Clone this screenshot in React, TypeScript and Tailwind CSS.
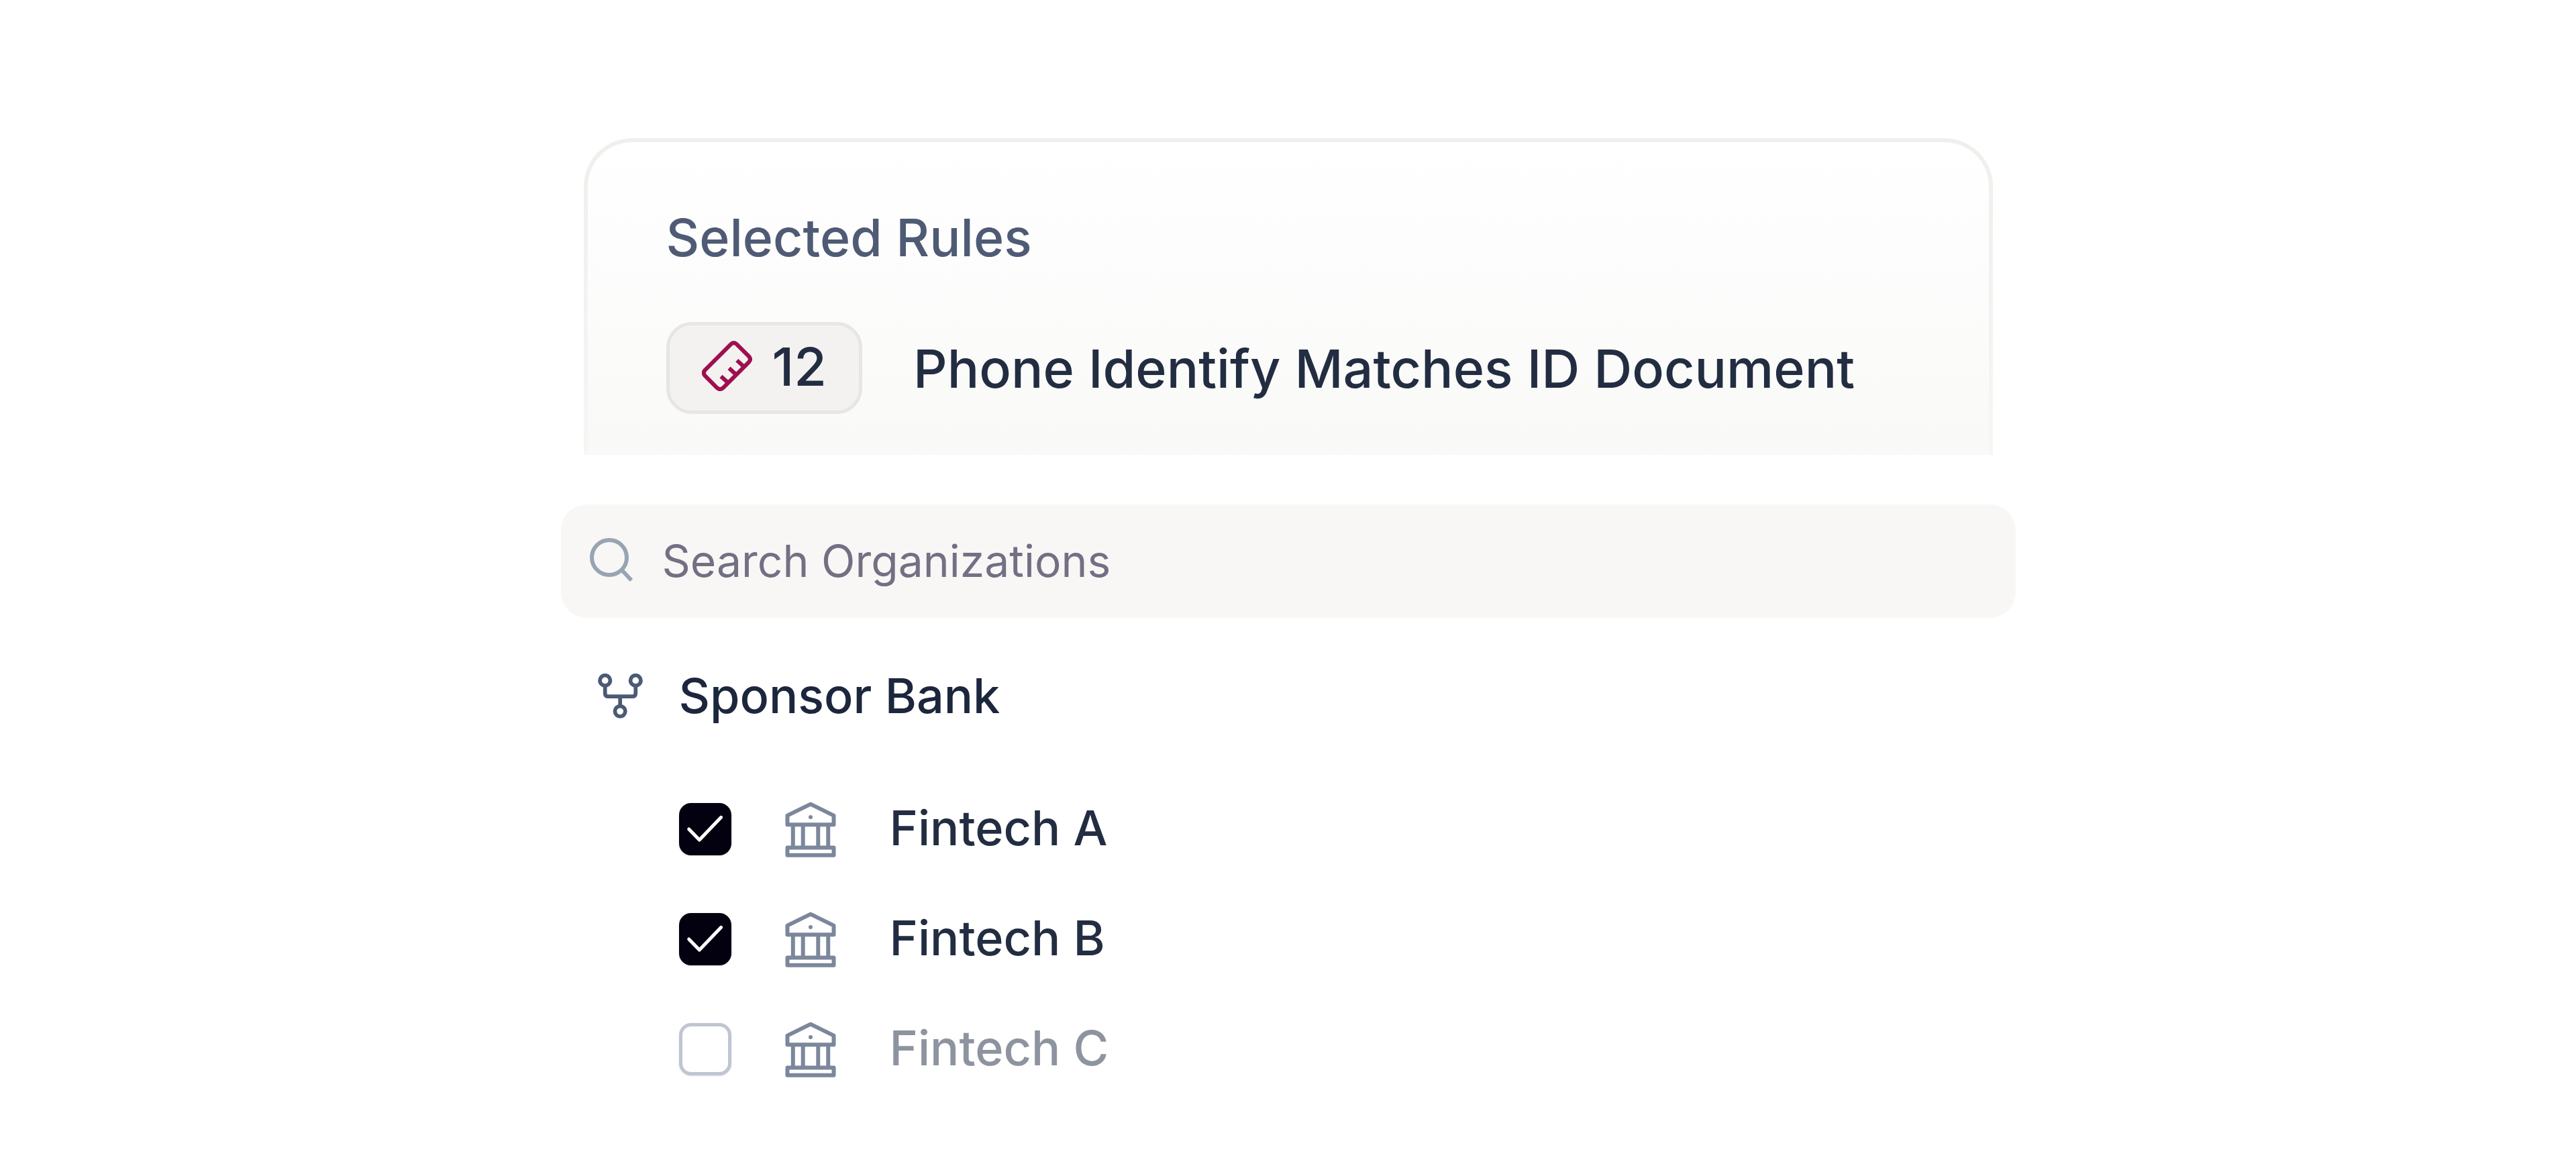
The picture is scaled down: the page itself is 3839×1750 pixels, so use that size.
import { useState } from "react";
import clsx from "clsx";

type Organization = { id: string; name: string; selected: boolean };

const initialOrganizations: Organization[] = [
  { id: "fintech-a", name: "Fintech A", selected: true },
  { id: "fintech-b", name: "Fintech B", selected: true },
  { id: "fintech-c", name: "Fintech C", selected: false },
];

function RulerIcon() {
  return (
    <svg viewBox="198 112 224 224" className="size-[75px] shrink-0" fill="none" stroke="#9f0f4f" strokeWidth="18" strokeLinejoin="round" aria-hidden="true">
      <path d="M327 127 212 242q-11 13 0 26l54 54q13 11 26 0L407 207q12-13 0-26l-54-54q-13-11-26 0Z" />
      <path d="m384 226-30-27M349 261l-30-27M313 297l-30-27" />
    </svg>
  );
}

function SearchIcon() {
  return (
    <svg viewBox="0 0 66 72" className="h-[72px] w-[66px] shrink-0" fill="none" stroke="#98a4b3" strokeWidth="6" aria-hidden="true">
      <circle cx="30" cy="30" r="26" />
      <path d="m48 48 15 16" />
    </svg>
  );
}

function BranchIcon() {
  return (
    <svg viewBox="62 75 200 200" className="size-[67px] shrink-0" fill="none" stroke="#4b5a75" strokeWidth="17" aria-hidden="true">
      <circle cx="94" cy="106" r="23" />
      <circle cx="230" cy="106" r="23" />
      <circle cx="161" cy="243" r="23" />
      <path d="M94 130v32q0 15 15 15h106q15 0 15-15v-32M161 177v43" />
    </svg>
  );
}

function BankIcon() {
  return (
    <svg viewBox="538 72 228 250" className="h-[83px] w-[76px] shrink-0" fill="none" stroke="#7c879c" strokeWidth="18" strokeLinejoin="round" aria-hidden="true">
      <path d="M548 175v-41l104-51 104 51v41ZM548 278h208v34H548Z" />
      <path d="M573 175v103M618 175v103M686 175v103M731 175v103" />
      <circle cx="652" cy="141" r="9" fill="#7c879c" stroke="none" />
    </svg>
  );
}

function SelectedRulesCard() {
  return (
    <section className="mx-[34px] rounded-t-[72px] bg-linear-to-b from-[#f0efec] to-[#f7f6f5] px-[6px] pt-[6px]">
      <div className="rounded-t-[66px] bg-linear-to-b from-white to-[#f9f9f8] px-[117px] pt-[94px] pb-[61px]">
        <h2 className="text-[77px] leading-[96px] font-medium text-[#4f5b74]">Selected Rules</h2>
        <div className="mt-[78px] flex items-center gap-[76px]">
          <div className="flex h-[137px] shrink-0 items-center gap-[30px] rounded-[38px] border-[5px] border-[#e7e6e4] bg-[#f3f2f0] px-12 pb-[6px]">
            <RulerIcon />
            <span className="text-[79px] leading-[96px] font-medium text-[#232d42]">12</span>
          </div>
          <p className="text-[79px] leading-[96px] font-medium whitespace-nowrap text-[#232d42]">
            Phone Identify Matches ID Document
          </p>
        </div>
      </div>
    </section>
  );
}

function OrganizationRow({ org, onToggle }: { org: Organization; onToggle: (id: string) => void }) {
  return (
    <li className="flex h-20 items-center gap-20">
      <span className="relative size-[78px] shrink-0">
        <input
          id={org.id}
          type="checkbox"
          checked={org.selected}
          onChange={() => onToggle(org.id)}
          className="block size-full appearance-none rounded-[18px] border-[5px] border-[#bfc5d2] bg-white shadow-sm checked:border-[#03010f] checked:bg-[#03010f]"
        />
        {org.selected && (
          <svg viewBox="65 78 234 234" className="pointer-events-none absolute inset-0 size-full" fill="none" stroke="white" strokeWidth="15" strokeLinecap="round" strokeLinejoin="round" aria-hidden="true">
            <path d="m109 195 47 48 97-101" />
          </svg>
        )}
      </span>
      <BankIcon />
      <label
        htmlFor={org.id}
        className={clsx("pb-1 text-[72px] leading-[80px] font-medium", org.selected ? "text-[#232d42]" : "text-[#8e949f]")}
      >
        {org.name}
      </label>
    </li>
  );
}

export default function App() {
  const [organizations, setOrganizations] = useState(initialOrganizations);
  const [query, setQuery] = useState("");

  const toggle = (id: string) =>
    setOrganizations((prev) => prev.map((o) => (o.id === id ? { ...o, selected: !o.selected } : o)));

  const visible = organizations.filter((o) => o.name.toLowerCase().includes(query.toLowerCase()));

  return (
    <main className="min-h-screen bg-white pt-[206px] pb-[140px] font-['Inter',sans-serif]">
      <div className="mx-auto w-full max-w-[2168px]">
        <SelectedRulesCard />

        <div className="mt-[74px] flex h-[169px] items-center gap-[43px] rounded-[38px] bg-[#f8f7f5] px-[42px]">
          <SearchIcon />
          <input
            type="text"
            aria-label="Search Organizations"
            placeholder="Search Organizations"
            value={query}
            onChange={(e) => setQuery(e.target.value)}
            className="h-24 min-w-0 flex-1 bg-transparent text-[66px] text-[#232d42] outline-none placeholder:text-[#737084]"
          />
        </div>

        <section className="mt-[72px]">
          <div className="flex h-[88px] items-center gap-[54px] pl-[55px]">
            <BranchIcon />
            <h3 className="text-[72px] leading-[88px] font-medium text-[#1c263c]">Sponsor Bank</h3>
          </div>
          <ul className="mt-[115px] flex flex-col gap-[84px] pl-44">
            {visible.map((org) => (
              <OrganizationRow key={org.id} org={org} onToggle={toggle} />
            ))}
          </ul>
        </section>
      </div>
    </main>
  );
}
